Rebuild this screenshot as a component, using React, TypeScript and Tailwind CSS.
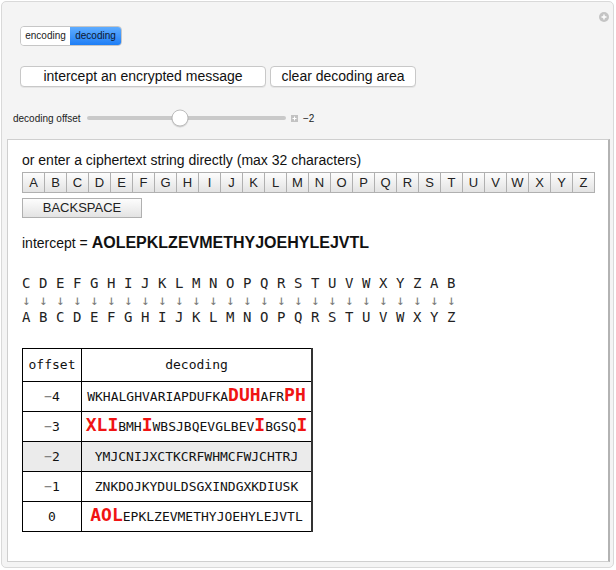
import React from "react";

type Seg = [string, boolean];

const SANS = "font-['Liberation_Sans',Arial,sans-serif]";
const MONO = "font-['DejaVu_Sans_Mono',monospace]";

const rows: { off: string; neg: boolean; segs: Seg[]; hl?: boolean }[] = [
  {
    off: "4",
    neg: true,
    segs: [
      ["WKHALGHVARIAPDUFKA", false],
      ["DUH", true],
      ["AFR", false],
      ["PH", true],
    ],
  },
  {
    off: "3",
    neg: true,
    segs: [
      ["XLI", true],
      ["BMH", false],
      ["I", true],
      ["WBSJBQEVGLBEV", false],
      ["I", true],
      ["BGSQ", false],
      ["I", true],
    ],
  },
  { off: "2", neg: true, segs: [["YMJCNIJXCTKCRFWHMCFWJCHTRJ", false]], hl: true },
  { off: "1", neg: true, segs: [["ZNKDOJKYDULDSGXINDGXKDIUSK", false]] },
  {
    off: "0",
    neg: false,
    segs: [
      ["AOL", true],
      ["EPKLZEVMETHYJOEHYLEJVTL", false],
    ],
  },
];

export default function App() {
  const topRow = "CDEFGHIJKLMNOPQRSTUVWXYZAB".split("");
  const botRow = "ABCDEFGHIJKLMNOPQRSTUVWXYZ".split("");
  const sliderFrac = 0.467;

  return (
    <div className={`w-[616px] h-[570px] bg-white pt-px pl-px ${SANS}`}>
      <div className="relative w-[613px] h-[567px] bg-[#f4f4f4] border border-[#d9d9d9] rounded-[5px] flex flex-col">
        {/* top-right plus icon */}
        <div className="absolute right-[4px] top-[10px] w-[10px] h-[10px] rounded-full bg-[#c4c4c4] flex items-center justify-center">
          <svg width="6" height="6" viewBox="0 0 6 6">
            <path d="M3 0.5v5M0.5 3h5" stroke="white" strokeWidth="1.4" />
          </svg>
        </div>

        {/* toggle */}
        <div className="mt-[24px] ml-[18px] flex h-[20px] w-[102px] rounded-[4px] border border-[#c6c6c6] overflow-hidden text-[10px] leading-none">
          <div className="w-[49px] bg-white flex items-center justify-center text-[#222]">encoding</div>
          <div className="flex-1 bg-linear-to-b from-[#5eacff] to-[#1c7ef6] flex items-center justify-center text-[#0d1830]">
            decoding
          </div>
        </div>

        {/* buttons */}
        <div className="mt-[20px] ml-[18px] flex gap-[4px]">
          <div className="w-[246px] h-[21px] bg-white border border-[#c8c8c8] rounded-[4px] shadow-[0_1px_0_rgba(0,0,0,0.06)] flex items-center justify-center text-[14px] text-[#111]">
            intercept an encrypted message
          </div>
          <div className="w-[146px] h-[21px] bg-white border border-[#c8c8c8] rounded-[4px] shadow-[0_1px_0_rgba(0,0,0,0.06)] flex items-center justify-center text-[14px] text-[#111]">
            clear decoding area
          </div>
        </div>

        {/* slider row */}
        <div className="mt-[23px] ml-[11px] flex items-center h-[16px] text-[10px] text-[#222]">
          <span className="w-[74px]">decoding offset</span>
          <div className="relative w-[199px] h-[4px] rounded-full bg-[#c9c9c9]">
            <div
              className="absolute top-1/2 w-[17px] h-[17px] -translate-x-1/2 -translate-y-1/2 rounded-full bg-white border border-[#bdbdbd] shadow-[0_1px_1px_rgba(0,0,0,0.15)]"
              style={{ left: `${sliderFrac * 100}%` }}
            />
          </div>
          <div className="ml-[5px] w-[7px] h-[7px] bg-[#c2c2c2] flex items-center justify-center">
            <svg width="5" height="5" viewBox="0 0 5 5">
              <path d="M2.5 0.5v4M0.5 2.5h4" stroke="white" strokeWidth="1" />
            </svg>
          </div>
          <span className="ml-[5px]">−2</span>
        </div>

        {/* white content area */}
        <div className="mt-[13px] ml-[5px] w-[603px] h-[423px] bg-white border border-[#cfcfcf] border-r-2 border-r-[#b3b3b3] flex flex-col pl-[14px]">
          <div className="mt-[12px] h-[17px] leading-[17px] text-[14px] text-[#111]">
            or enter a ciphertext string directly (max 32 characters)
          </div>

          <div className="mt-[3px] flex border-l border-[#b0b0b0] w-fit">
            {botRow.map((k) => (
              <div
                key={k}
                className="w-[22px] h-[21px] border-y border-r border-[#b0b0b0] bg-linear-to-b from-[#fdfdfd] to-[#e3e3e3] flex items-center justify-center text-[13px] text-[#222]"
              >
                {k}
              </div>
            ))}
          </div>

          <div className="mt-[5px] w-[120px] h-[20px] border border-[#b0b0b0] bg-linear-to-b from-[#fdfdfd] to-[#e3e3e3] flex items-center justify-center text-[13px] text-[#222]">
            BACKSPACE
          </div>

          <div className="mt-[15px] h-[20px] flex items-center text-[#111]">
            <span className="text-[14px] whitespace-pre">intercept = </span>
            <span className="text-[16px] font-bold">AOLEPKLZEVMETHYJOEHYLEJVTL</span>
          </div>

          {/* mapping */}
          <div className={`mt-[22px] flex flex-col ${MONO} text-[14px] text-[#222]`}>
            <div className="flex h-[17px] leading-[17px]">
              {topRow.map((c, i) => (
                <span key={i} className="w-[17px]">
                  {c}
                </span>
              ))}
            </div>
            <div className="flex h-[17px] leading-[17px] text-[#7d7d7d] text-[14px]">
              {topRow.map((_, i) => (
                <span key={i} className="w-[17px]">
                  ↓
                </span>
              ))}
            </div>
            <div className="flex h-[17px] leading-[17px]">
              {botRow.map((c, i) => (
                <span key={i} className="w-[17px]">
                  {c}
                </span>
              ))}
            </div>
          </div>

          {/* table */}
          <table className={`mt-[22px] border-collapse ${MONO} text-[13px] text-[#111] w-[291px]`}>
            <thead>
              <tr className="h-[33px]">
                <th className="w-[59px] border border-black font-normal text-center p-0">offset</th>
                <th className="border border-black border-r-2 border-r-[#333] font-normal text-center p-0">decoding</th>
              </tr>
            </thead>
            <tbody>
              {rows.map((r) => (
                <tr key={r.off} className={`h-[30px] ${r.hl ? "bg-[#ebebeb]" : ""}`}>
                  <td className="border border-black text-center p-0">
                    {r.neg && <span className="text-[#777]">−</span>}
                    {r.off}
                  </td>
                  <td className="border border-black border-r-2 border-r-[#333] text-center p-0 leading-[20px] whitespace-nowrap">
                    {r.segs.map(([t, red], i) =>
                      red ? (
                        <span key={i} className="text-[18px] font-bold text-[#f01414] leading-none">
                          {t}
                        </span>
                      ) : (
                        <span key={i}>{t}</span>
                      )
                    )}
                  </td>
                </tr>
              ))}
            </tbody>
          </table>
        </div>
      </div>
    </div>
  );
}
